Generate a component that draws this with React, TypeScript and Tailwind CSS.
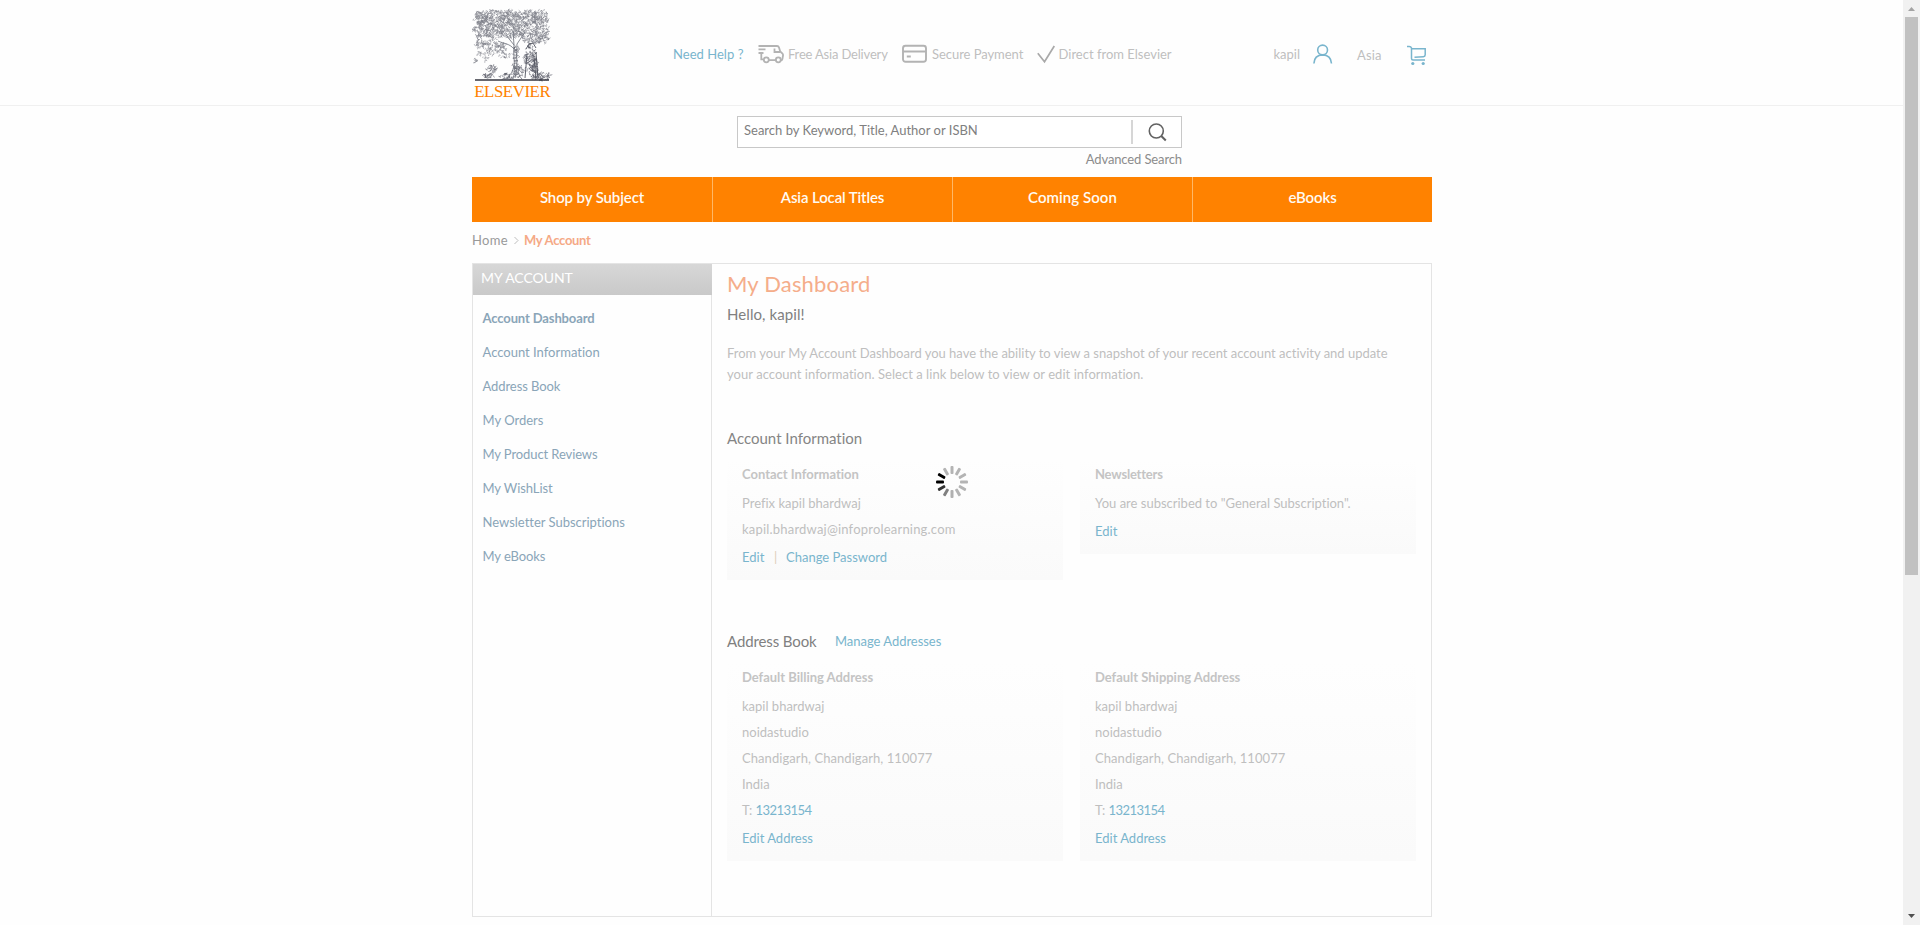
type Blob = [number, number, number, number, number];

/* Engraved foliage: many short curled strokes scattered inside ellipses. */
function engrave(blobs: Blob[], seed: number) {
  let s = seed;
  const rnd = () => {
    s = (s * 1103515245 + 12345) % 2147483648;
    return s / 2147483648;
  };
  let d = "";
  for (const [cx, cy, rx, ry, n] of blobs) {
    for (let i = 0; i < n; i++) {
      const a = rnd() * Math.PI * 2;
      const r = Math.sqrt(rnd());
      const x = cx + Math.cos(a) * rx * r;
      const y = cy + Math.sin(a) * ry * r;
      const q = () => (rnd() * 4.4 - 2.2).toFixed(1);
      d += `M${x.toFixed(1)} ${y.toFixed(1)}q${q()} ${q()} ${q()} ${q()}`;
    }
  }
  return d;
}

const foliage = engrave(
  [
    [9, 10, 8, 7, 110],
    [22, 10, 11, 8, 150],
    [37, 9, 11, 7, 150],
    [53, 10, 12, 8, 150],
    [68, 10, 9, 8, 130],
    [9, 22, 8, 8, 110],
    [22, 23, 11, 8, 140],
    [37, 22, 11, 8, 140],
    [53, 23, 12, 8, 140],
    [69, 23, 8, 8, 110],
    [70, 32, 7, 4, 40],
    [58, 33, 8, 4, 40],
    [9, 36, 6, 5, 40],
    [20, 36, 8, 5, 45],
    [29, 40, 6, 5, 45],
    [17, 44, 7, 3, 22],
    [33, 47, 5, 3, 18],
    [7, 46, 4, 2, 10],
    [4, 52, 2.5, 3, 10],
    [14, 50, 3, 3, 8],
  ],
  7,
);
const ground = engrave(
  [
    [20, 62, 5, 5, 34],
    [17, 68, 6, 2, 24],
    [35, 68, 8, 3, 34],
    [47, 64, 6, 6, 40],
    [70, 68, 9, 4, 60],
    [58, 50, 6, 13, 90],
    [62, 60, 4, 11, 80],
    [44, 50, 3, 14, 46],
  ],
  19,
);

function Logo() {
  return (
    <svg width="82" height="92" viewBox="0 0 82 92" fill="none">
      <path d={foliage} stroke="#7c7f88" strokeWidth=".55" />
      <path d={ground} stroke="#5a5d68" strokeWidth=".6" />
      <path d="M41 71c3-10 0-24 1-34l-8-10M43 70c3-10 1-22 2-34l8-12M42 37l-1-14M34 71c5-4 7-8 8-14M50 71c-3-3-4-6-4-12M42 41c-5-6-10-5-16-8" stroke="#6a6d77" strokeWidth=".8" />
      <path d="M54 41l3-5 4-1 3 5M55 46l-2 24M64 44l2 27M62 50l2 20" stroke="#50535f" strokeWidth=".9" />
      <path d="M3 72h74" stroke="#33353f" strokeWidth="1.4" />
      <text x="2.2" y="89.2" fontFamily="Liberation Serif, serif" fontSize="16.800" letterSpacing="-.4" fill="#ff8200">
        ELSEVIER
      </text>
    </svg>
  );
}

function Truck() {
  return (
    <svg width="26" height="20" viewBox="0 0 26 20" fill="none" stroke="#b3b3b3" strokeWidth="1.800">
      <path d="M.5 2h18.500q1.500 0 2 1.500l1.200 4 2.300 2.200q.7.700.5 1.800l-.6 3.600q-.2 1.200-1.400 1.200" />
      <path d="M.5 5.400h7M.5 9h5M3.300 9v6.300h2M11 16.200h7.500M22 8h-5.500V4.600" />
      <circle cx="8.300" cy="15.800" r="2.500" />
      <circle cx="20.300" cy="15.800" r="2.500" />
    </svg>
  );
}

function Card() {
  return (
    <svg width="26" height="20" viewBox="0 0 26 20" fill="none" stroke="#b3b3b3" strokeWidth="1.900">
      <rect x="1" y="1.800" width="23" height="16" rx="2.500" />
      <path d="M1 7.500h23M4.800 12.500h4" />
    </svg>
  );
}

function Person() {
  return (
    <svg width="20" height="20" viewBox="0 0 20 20" fill="none" stroke="#79b5cd" strokeWidth="1.600">
      <circle cx="9.600" cy="6" r="4.900" />
      <path d="M.9 19.500q.4-8.400 8.700-8.600 8.300.2 8.900 8.600" />
    </svg>
  );
}

function Cart() {
  return (
    <svg width="20" height="21" viewBox="0 0 20 21" fill="none" stroke="#79b5cd" strokeWidth="1.500">
      <path d="M0 1.500h2.200q1.800 0 2.300 1.500v10.400q0 1.500 1.500 1.500H18M4.500 3.800h13.700v6q0 1.800-1.800 1.900L7.500 12.200" />
      <circle cx="5.800" cy="18.500" r="1.600" fill="#79b5cd" stroke="none" />
      <circle cx="16.200" cy="18.500" r="1.600" fill="#79b5cd" stroke="none" />
    </svg>
  );
}

const spokes = ["#b4b4b4", "#b4b4b4", "#b4b4b4", "#b4b4b4", "#b4b4b4", "#b4b4b4", "#b0b0b0", "#808080", "#333333", "#000000", "#000000", "#b4b4b4"];

function Spinner() {
  return (
    <svg className="absolute left-[936px] top-[466px]" width="32" height="32" viewBox="-16 -16 32 32">
      {spokes.map((c, i) => (
        <rect key={i} x="-1.500" y="-16" width="3" height="8" rx="1" fill={c} transform={`rotate(${i * 30})`} />
      ))}
    </svg>
  );
}

function Header() {
  return (
    <header className="h-[106px] border-b border-[#f0f0f0]">
      <div className="ml-[472px] flex w-[960px] text-[#bfbfbf] leading-5">
        <div className="w-[201px] shrink-0 pt-2">
          <Logo />
        </div>
        <div className="flex shrink-0 pt-11">
          <a className="w-[85px] tracking-[0.030px] text-[#79b5cd]">Need Help ?</a>
          <span className="w-[30px]"><Truck /></span>
          <span className="w-[113.500px] tracking-[-0.180px]">Free Asia Delivery</span>
          <span className="w-[30.500px]"><Card /></span>
          <span className="w-[105px] tracking-[-0.050px]">Secure Payment</span>
          <span className="w-[21.500px]">
            <svg width="19" height="20" viewBox="0 0 19 20" fill="none" stroke="#a9a9a9" strokeWidth="1.700">
              <path d="M.8 9.300l6.700 8.500L17.300 2" />
            </svg>
          </span>
          <span className="w-[215px]">Direct from Elsevier</span>
          <span className="w-[39.500px]">kapil</span>
          <span className="w-11"><Person /></span>
          <span className="w-[50px] pt-px tracking-[0.150px]">Asia</span>
          <span className="pt-px"><Cart /></span>
        </div>
      </div>
    </header>
  );
}

function Search() {
  return (
    <div className="ml-[472px] w-[960px]">
      <div className="ml-[265px] w-[445px] pt-[10px]">
        <div className="flex h-8 border border-[#c8c8c8] bg-white">
          <span className="w-[393px] pl-[6px] pt-[3px] leading-5 tracking-[0.010px] text-[#808080]">Search by Keyword, Title, Author or ISBN</span>
          <span className="mt-[3px] h-6 w-[2px] bg-[#d6d6d6]" />
          <svg className="ml-[15px] mt-[6px]" width="20" height="20" viewBox="0 0 20 20" fill="none" stroke="#626262" strokeWidth="1.600">
            <circle cx="8.300" cy="8" r="7" />
            <path d="M13.300 13l4.500 4.500" strokeWidth="2" />
          </svg>
        </div>
        <div className="h-[29px] pt-px text-right leading-5 tracking-[-0.120px] text-[#8c8c8c]">Advanced Search</div>
      </div>
    </div>
  );
}

function Nav() {
  return (
    <nav className="ml-[472px] grid h-[45px] w-[960px] grid-cols-4 bg-[#ff8200] text-center text-[15px] font-semibold leading-5 tracking-[-0.120px] text-[#fffaf2]">
      <a className="pt-[10px]">Shop by Subject</a>
      <a className="border-l border-[#ffb866] pt-[10px]">Asia Local Titles</a>
      <a className="border-l border-[#ffb866] pt-[10px] tracking-[0.050px]">Coming Soon</a>
      <a className="border-l border-[#ffb866] pt-[10px]">eBooks</a>
    </nav>
  );
}

function Sidebar() {
  return (
    <aside className="flex w-[239px] flex-col">
      <h2 className="h-[31px] bg-linear-to-b from-[#d7d7d7] to-[#c9c9c9] pl-2 text-[14px] leading-[27px] tracking-[-0.050px] text-white">MY ACCOUNT</h2>
      <ul className="flex-1 border-r border-[#e4e4e4] pl-[9.500px] pt-[6px] leading-[34px] text-[#8aa5b8]">
        <li className="font-bold tracking-[-0.120px]">Account Dashboard</li>
        <li>Account Information</li>
        <li className="tracking-[-0.080px]">Address Book</li>
        <li>My Orders</li>
        <li className="tracking-[-0.100px]">My Product Reviews</li>
        <li className="tracking-[-0.060px]">My WishList</li>
        <li className="tracking-[-0.010px]">Newsletter Subscriptions</li>
        <li className="tracking-[-0.080px]">My eBooks</li>
      </ul>
    </aside>
  );
}

const box = "w-[336px] bg-linear-to-b from-[#fefefe] to-[#fafafa] pb-[10px] pl-[15px] pt-[5px] leading-[26px]";

function Address({ title }: { title: string }) {
  return (
    <div className={box}>
      <h4 className="mb-[6px] font-bold leading-5 tracking-[-0.020px] text-[#c4c4c4]">{title}</h4>
      <p>kapil bhardwaj</p>
      <p>noidastudio</p>
      <p className="tracking-[0.070px]">Chandigarh, Chandigarh, 110077</p>
      <p>India</p>
      <p>
        T: <a className="tracking-[-0.560px] text-[#79b5cd]">13213154</a>
      </p>
      <p className="mt-[2px] text-[#79b5cd]">Edit Address</p>
    </div>
  );
}

function Dashboard() {
  return (
    <main className="pl-[15px] pt-1 text-[#bfbfbf]">
      <h1 className="text-[22px] leading-[31px] tracking-[0.180px] text-[#f5ad8a]">My Dashboard</h1>
      <h3 className="text-[15px] leading-[30px] tracking-[0.080px] text-[#808080]">Hello, kapil!</h3>
      <p className="mt-[14px] w-[690px] leading-[21px]">
        <span className="tracking-[-0.010px]">From your My Account Dashboard you have the ability to view a snapshot of your recent account activity and update</span>
        <br />
        <span className="tracking-[0.040px]">your account information. Select a link below to view or edit information.</span>
      </p>
      <h3 className="mt-[38px] text-[15px] leading-[30px] text-[#858585]">Account Information</h3>
      <div className="mt-[6px] flex h-[121px] items-start gap-[17px]">
        <div className={box}>
          <h4 className="mb-[6px] font-bold leading-5 tracking-[-0.010px] text-[#c4c4c4]">Contact Information</h4>
          <p>Prefix kapil bhardwaj</p>
          <p className="tracking-[0.200px]">kapil.bhardwaj@infoprolearning.com</p>
          <p className="mt-[2px] flex text-[#79b5cd]">
            <a className="w-8">Edit</a>
            <span className="w-3 text-[#e0cdb8]">|</span>
            <a>Change Password</a>
          </p>
        </div>
        <div className={box}>
          <h4 className="mb-[6px] font-bold leading-5 tracking-[-0.210px] text-[#c4c4c4]">Newsletters</h4>
          <p>You are subscribed to "General Subscription".</p>
          <p className="mt-[2px] text-[#79b5cd]">Edit</p>
        </div>
      </div>
      <div className="mt-[46px] flex leading-[30px]">
        <h3 className="w-[108px] text-[15px] tracking-[-0.110px] text-[#808080]">Address Book</h3>
        <a className="tracking-[-0.030px] text-[#79b5cd]">Manage Addresses</a>
      </div>
      <div className="mt-[6px] flex items-start gap-[17px]">
        <Address title="Default Billing Address" />
        <Address title="Default Shipping Address" />
      </div>
    </main>
  );
}

export default function App() {
  return (
    <div className="relative flex h-[925px] w-[1920px] overflow-hidden bg-[#fefefe] font-['Lato',sans-serif] text-[13px] [font-variant-ligatures:none]">
      <div className="w-[1903px]">
        <Header />
        <Search />
        <Nav />
        <div className="ml-[472px] flex h-[41px] w-[960px] items-start pt-2 leading-5">
          <span className="w-[42px] tracking-[0.300px] text-[#999999]">Home</span>
          <svg className="mt-[6px] mr-[5px]" width="5" height="9" viewBox="0 0 5 9" fill="none" stroke="#bdbdbd">
            <path d="M.5 1l3.500 3.500L.5 8" />
          </svg>
          <span className="font-bold tracking-[-0.280px] text-[#f5a986]">My Account</span>
        </div>
        <div className="ml-[472px] flex h-[654px] w-[960px] border border-[#e4e4e4]">
          <Sidebar />
          <Dashboard />
        </div>
      </div>
      <div className="flex w-[17px] flex-col items-center bg-[#f1f1f1]">
        <svg className="mt-[7px]" width="7" height="4" viewBox="0 0 7 4" fill="#a3a3a3">
          <path d="M0 4L3.500 0 7 4z" />
        </svg>
        <div className="mt-[6px] h-[558px] w-[13px] bg-[#c1c1c1]" />
        <svg className="mt-auto mb-[7px]" width="7" height="4" viewBox="0 0 7 4" fill="#505050">
          <path d="M0 0l3.500 4L7 0z" />
        </svg>
      </div>
      <Spinner />
    </div>
  );
}
